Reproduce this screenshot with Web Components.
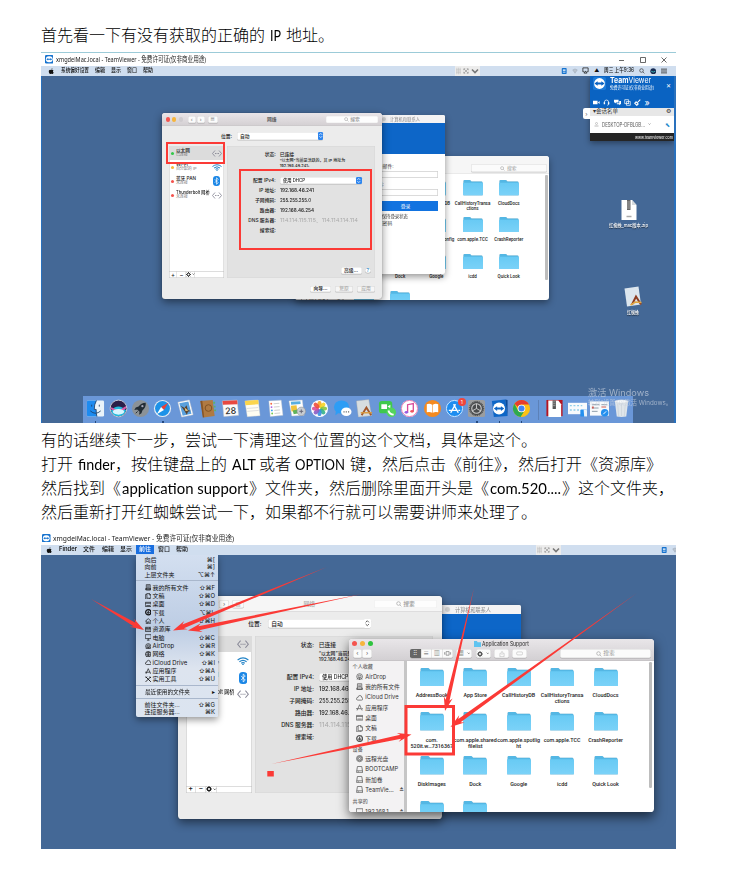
<!DOCTYPE html>
<html>
<head>
<meta charset="utf-8">
<title>Network guide</title>
<style>
html,body{margin:0;background:#fff}
body{width:740px;height:871px;overflow:hidden;font-family:Inter,"Noto Sans CJK SC",sans-serif;color:#222}
</style>
</head>
<body>
<guide-page></guide-page>
<script>
const def=(name,html,after)=>customElements.define(name,class extends HTMLElement{
  connectedCallback(){
    if(this.shadowRoot)return;
    const r=this.attachShadow({mode:'open'});
    r.innerHTML=typeof html==='function'?html(this):html;
    if(after)after(this,r);
  }
});
const svg=(vb,body,w,h)=>`<svg viewBox="${vb}" width="${w}" height="${h||w}" fill="none" style="display:block;flex:none">${body}</svg>`;

/* Text squeezed or stretched horizontally to a given width */
def('fit-text',e=>`<style>:host{display:inline-block;white-space:nowrap;width:${e.getAttribute('w')}px;flex:none}span{display:inline-block;transform-origin:0 50%}</style><span><slot></slot></span>`,
(e,r)=>{const s=r.querySelector('span'),a=e.getBoundingClientRect().width,b=s.getBoundingClientRect().width;if(a&&b)s.style.transform=`scaleX(${a/b})`;});

/* One line of the document */
def('doc-line',`<style>:host{display:flex;align-items:center;height:24px;font:300 16px/24px Lato,"Noto Sans CJK SC",sans-serif;color:#000;white-space:pre}::slotted(fit-text){font-weight:400}</style><slot></slot>`);

/* Icon glyphs */
const P={
 apple:svg('0 0 10 10','<path fill="#111" d="M6.7 2.5C5.9 2.5 5.6 3 5 3S4 2.5 3.3 2.5C2 2.5 1.2 3.7 1.2 5.3c0 2 1.300 4 2.400 4 .6 0 .8-.3 1.500-.3s.9.3 1.500.3c.9 0 1.700-1.200 2.100-2.400C7.300 6.200 7.300 3.900 8.500 3.400c-.4-.6-1-.9-1.800-.9zM6.800.3C5.800.4 5 1.300 5 2.300 6 2.300 6.800 1.300 6.800.3z"/>',6.5),
 search:svg('0 0 10 10','<circle cx="4.200" cy="4.200" r="3" stroke="currentColor"/><path d="M6.500 6.500 9 9" stroke="currentColor"/>',5),
 eth:svg('0 0 20 14','<path d="M6 1 1 7l5 6M14 1l5 6-5 6" stroke="#8a8a98" stroke-width="1.700"/><path d="M6 7h1.500M9.300 7h1.500M12.500 7h1.500" stroke="#667" stroke-width="1.800"/>',10,7),
 wifi:svg('0 0 20 14','<path d="M1 5Q10-2 19 5M4 8Q10 3 16 8M7 10.500Q10 8 13 10.500" stroke="#2585c8" stroke-width="2"/><circle cx="10" cy="12.500" r="1.400" fill="#2585c8"/>',10,7),
 bt:svg('0 0 14 20','<rect width="14" height="20" rx="6" fill="#1b87e6"/><path d="M3.500 6.500l7 7L7 16.500v-13l3.500 3-7 7" stroke="#fff" stroke-width="1.300"/>',7,10),
 tv:svg('0 0 10 10','<rect width="10" height="10" rx="1.500" fill="#1673cf"/><rect x="1" y="1.500" width="8" height="7" rx="3.500" fill="#fff"/><path d="M1.500 5 3.700 3.500v1h2.600v-1L8.500 5 6.300 6.500v-1H3.700v1z" fill="#1673cf"/>',8.5),
 gear:svg('0 0 10 10','<circle cx="5" cy="5" r="2.700" stroke="currentColor" stroke-width="2"/><path d="M5 0v2M5 8v2M0 5h2M8 5h2M1.500 1.500l1.300 1.300M7.200 7.200l1.300 1.300M8.500 1.500 7.200 2.800M2.800 7.200 1.500 8.500" stroke="currentColor" stroke-width="1.500"/>',5),
 caret:svg('0 0 6 4','<path d="m1 1 2 2 2-2" stroke="currentColor"/>',3,2),
 updown:svg('0 0 8 10','<path d="m2 4 2-2 2 2M2 6l2 2 2-2" stroke="currentColor" stroke-width="1.100"/>',5.5,7)
};
const G={
 airdrop:'<circle cx="5" cy="5" r="4"/><circle cx="5" cy="5" r="2"/><path d="M5 5v5M3 7 1.500 9M7 7l1.500 2"/>',
 files:'<path d="M2 1h6v8H2zM3 3h4M3 5h4M1 7h8v2H1z"/>',
 cloud:'<path d="M2.500 8.500Q0 8 .6 6 1 4.700 2.500 5 3 2 5.500 2 8 2.200 8 5q2 .3 1.600 2-.3 1.500-2 1.500z"/>',
 apps:'<path d="M1.500 9 5 1l3.500 8M0 6.500h7M8.500 6.500H10"/>',
 desk:'<path d="M.5 2h9v6.500h-9zM.5 3.500h9M2 7h6"/>',
 docs:'<path d="M3 .5h3.500L9 3v5H3zM6.500.5V3H9M3 2H1v7.500h6V8"/>',
 down:'<circle cx="5" cy="5" r="4" stroke-width="1.800"/><path d="M5 2.500v4M3 5l2 2 2-2" stroke-width="1.500"/>',
 disc:'<circle cx="5" cy="5" r="4.300"/><circle cx="5" cy="5" r="1.500"/><circle cx="5" cy="5" r="3"/>',
 drive:'<path d="M2 .7h6l1 6V9.300H1V6.700zM1 6.700h8M3 8h1"/>',
 home:'<path d="M.5 5 5 1l4.500 4M2 4v5.500h2V6h2v3.500h2V4"/>',
 lib:'<path d="M.5 2h9v6.500h-9zM.5 4h9M.5 6h9M3 2v2M7 2v2"/>',
 comp:'<path d="M.5 1h9v6h-9zM3 9.500h4M5 7v2.500"/>',
 net:'<circle cx="5" cy="5" r="4.300"/><path d="M.7 5h8.600M5 .7v8.600M2 2q3 2 6 0M2 8q3-2 6 0"/>',
 tool:'<path d="m1 1 8 8M9 1 1 9M1 3l2-2M7 1l2 2" stroke-width="1.400"/>'
};
const gl=(n,s)=>svg('0 0 10 10',`<g stroke="currentColor" stroke-width="1">${G[n]}</g>`,s);
const CHROME_EDGE='box-shadow:inset 0 0 0 .5px #0002,0 .4px .5px #0003';

/* Network preferences window */
def('network-window',e=>{const off=e.hasAttribute('inactive');
const item=(c,a,b,i,sel)=>`<div class="it ${sel?'sel':''}"><i style="background:${c}"></i><div class="nm"><b>${a}</b><em>${b}</em></div><div class="ic">${P[i]}</div></div>`;
const row=(l,v,c)=>`<div class="row ${c||''}"><label>${l}:</label><span>${v}</span></div>`;
return `<style>
:host{display:flex;flex-direction:column;width:220px;height:186px;background:#ececec;border-radius:3px;box-shadow:0 3px 8px #0007,0 0 1px #0006;font-size:4.800px;line-height:5px;font-weight:500;overflow:hidden;color:#1a1a1a;white-space:nowrap}
.tb{height:13px;flex:none;display:flex;align-items:center;padding:0 4px 0 3.500px;background:${off?'#f6f6f6':'linear-gradient(#e9e5e8,#d3cfd2)'};box-shadow:inset 0 -.5px #c5c3c5;box-sizing:border-box;gap:2.500px}
.tb>i{width:4.200px;height:4.200px;border-radius:50%}
.bt{background:#fbfbfb;${CHROME_EDGE};border-radius:1.500px;height:6.800px;width:8.500px;display:flex;align-items:center;justify-content:center;color:#777}
.ti{flex:1;text-align:center;color:${off?'#aaa':'#444'}}
.se{width:52px;height:7px;background:#fdfdfd;box-shadow:inset 0 0 0 .5px #0001;border-radius:1.500px;display:flex;align-items:center;justify-content:center;color:#999;gap:1px}
.loc{height:20px;flex:none;display:flex;align-items:center;padding-left:59px;gap:5px}
.sel1{background:#fff;${CHROME_EDGE};border-radius:1.500px;height:7.200px;display:flex;align-items:center;padding-left:3px;justify-content:space-between}
.sel1 u{background:${off?'#fff':'#2f86ee'};color:${off?'#555':'#fff'};border-radius:1.200px;height:7.200px}
.mid{display:flex;gap:3px;padding:0 7px 0 6.700px;height:131.500px;flex:none}
.side{width:55px;background:#fff;box-shadow:inset 0 0 0 .5px #c4c4c4;display:flex;flex-direction:column}
.it{height:14px;display:flex;align-items:center;padding:0 2px 0 2px;gap:2.200px}
.it.sel{background:#dcdcdc}
.it>i{width:3px;height:3px;border-radius:50%;flex:none}
.nm{flex:1;min-width:0;display:flex;flex-direction:column}
.nm b{font-weight:500;font-size:4.700px}.nm em{font-style:normal;font-weight:400;color:#777;font-size:4px;line-height:4.600px}
.ic{width:10px;display:flex;justify-content:center}
.ft{margin-top:auto;height:6.500px;box-shadow:inset 0 .5px #bbb;display:flex;align-items:center}
.ft span{width:8.500px;height:100%;box-shadow:inset -.5px 0 #ccc;display:flex;justify-content:center;align-items:center;font-size:6px;gap:1px}
.pan{flex:1;background:#e2e2e2;box-shadow:inset 0 0 0 .5px #d6d6d6;box-sizing:border-box;padding:5.500px 13px 4px 0;display:flex;flex-direction:column}
.row{display:flex;height:9.950px;flex:none;align-items:center;gap:4px}
.row label{width:49px;text-align:right}
.row .sel1{width:79px}
.row.st{height:5.500px}
.gr span{color:#aaa;font-weight:400}.sm{font-size:4px;line-height:5px;padding-left:53px;height:18.600px;flex:none;padding-top:1.300px;box-sizing:border-box}
.adv{margin-top:auto;display:flex;justify-content:flex-end;gap:3.500px;margin-right:-8.500px;align-items:center}
.btn{background:#fff;${CHROME_EDGE};border-radius:1.500px;height:6.500px;display:flex;align-items:center;justify-content:center}
.btn.d{color:#aaa;background:#f6f6f6}
.act{display:flex;justify-content:flex-end;gap:4px;padding:8px 7px 0 0}
</style>
<div class="tb"><i style="background:${off?'#ddd':'#f4534e'}"></i><i style="background:${off?'#ddd':'#f6b53c'}"></i><i style="background:#cfcccf"></i>
<div class="bt" style="margin-left:2px">‹</div><div class="bt" style="margin-left:-2px">›</div><div class="bt" style="width:10px;font-size:4px">▤</div>
<div class="ti">网络</div><div class="se">${P.search}搜索</div></div>
<div class="loc"><span>位置:</span><div class="sel1" style="width:83px">自动<u>${P.updown}</u></div></div>
<div class="mid"><div class="side">
${item('#34c84a','以太网','已连接','eth',1)}${item('#f6b53c','Wi-Fi','自分配的 IP','wifi')}${item('#f4534e','蓝牙 PAN','未连接','bt')}${item('#f4534e','<fit-text w="33.5">Thunderbolt 网桥</fit-text>','未连接','eth')}
<div class="ft"><span>+</span><span>−</span><span style="width:9px">${P.gear}${P.caret}</span></div></div>
<div class="pan">${row('状态','已连接','st')}<div class="sm">“以太网”当前是活跃的，其 IP 地址为<br>192.168.46.241。</div>
<div class="row"><label>配置 IPv4:</label><div class="sel1"><fit-text w="22">使用 DHCP</fit-text><u>${P.updown}</u></div></div>
${row('IP 地址','<fit-text w="34">192.168.46.241</fit-text>')}${row('子网掩码','<fit-text w="31">255.255.255.0</fit-text>')}${row('路由器','<fit-text w="34">192.168.46.254</fit-text>')}${row('DNS 服务器','<fit-text w="78">114.114.115.115、114.114.114.114</fit-text>','gr')}${row('搜索域','')}
<div class="adv"><div class="btn" style="width:21px">高级...</div><div class="btn" style="width:5.500px;height:5.500px;border-radius:50%;color:#28c">?</div></div></div></div>
<div class="act"><div class="btn" style="width:21px">向导...</div><div class="btn d" style="width:18px">复原</div><div class="btn d" style="width:18px">应用</div></div>`});

/* Folder tile in an icon grid */
def('folder-tile',e=>`<style>:host{display:flex;flex-direction:column;align-items:center;text-align:center;font:500 4.500px/5px Roboto,sans-serif;letter-spacing:-.02px;color:#222;white-space:nowrap;height:36.900px}
div{margin-top:5px;display:flex;flex-direction:column;align-items:center}svg{filter:drop-shadow(0 .3px .3px #0003)}</style>
${svg('0 0 40 31','<defs><linearGradient id="g" x2="0" y2="1"><stop stop-color="#68caf4"/><stop offset="1" stop-color="#7bd2f8"/></linearGradient></defs><path fill="#54b7e4" d="M1 2Q1 0 3 0h10q2 0 3 2l1 1h20q2 0 2 2v10H1z"/><path fill="url(#g)" d="M0 7q0-1.500 1.500-1.500h37Q40 5.500 40 7v22q0 2-2 2H2q-2 0-2-2z"/>',20,15.5)}
<div>${(e.getAttribute('name')||'').split('|').map(t=>`<span>${t}</span>`).join('')}</div>`);

/* Finder window */
def('finder-window',e=>{const off=e.hasAttribute('inactive');
const names=['AddressBook','App Store','CallHistoryDB','CallHistoryTransa|ctions','CloudDocs','com.|520it.w…7316367','com.apple.shared|filelist',e.getAttribute('third')||'com.apple.spotlig|ht','com.apple.TCC','CrashReporter','DiskImages','Dock','Google','icdd','Quick Look','',''];
const s=(i,t,x)=>`<p>${gl(i,6)}<span>${t}</span>${x?'<b>⏏</b>':''}</p>`;
const tb=(w,c)=>`<div class="b" style="width:${w}px">${c}</div>`;
return `<style>
:host{display:flex;flex-direction:column;width:254px;height:144px;background:#fff;border-radius:3px;overflow:hidden;font-size:4.800px;color:#333;white-space:nowrap}
.hd{height:18px;flex:none;background:${off?'#f6f6f6':'linear-gradient(#e9e6e9,#d2cfd2)'};box-shadow:inset 0 -.5px ${off?'#ddd':'#bcb9bc'};display:flex;flex-direction:column}
.t{height:7.700px;display:grid;grid-template-columns:60px 1fr 60px;align-items:center;padding:0 2.500px;line-height:6px;color:#222}
.t>div{display:flex;gap:2.300px;align-items:center}.t i{width:4.300px;height:4.300px;border-radius:50%}
.t .n{justify-content:center;gap:1px;visibility:${off?'hidden':'visible'}}
.bar{display:flex;padding:.8px 2.500px 0 3px;align-items:center}
.b{height:7.200px;background:#fbfbfb;${CHROME_EDGE};border-radius:1.500px;display:flex;align-items:center;justify-content:space-around;color:#555;line-height:7px}
${off?'.bar>.b:not(.se){visibility:hidden}':''}
.v{overflow:hidden}.v>*{flex:1;height:100%;display:grid;place-items:center}.v>*:first-child{background:#666;color:#fff}.v>*+*{box-shadow:inset .4px 0 #ccc}
.se{justify-content:center;gap:1.500px;color:#999;margin-left:auto}
.bd{flex:1;display:flex;min-height:0}
aside{width:48.600px;box-sizing:border-box;background:#f3f2f3;display:flex;flex-direction:column;padding:1px 3px 0;border-right:2.800px solid #c6c6c6;height:126px;overflow:hidden}
h4{margin:0;font:500 4.200px/8px Inter,"Noto Sans CJK SC";color:#666;flex:none}
p{margin:0;height:8.600px;display:flex;align-items:center;gap:1.800px;padding-left:2.800px;color:#555;line-height:8px;flex:none}p span{color:#333}p b{margin-left:3px;font-size:4px}
.g{flex:1;display:grid;grid-template-columns:repeat(5,36.200px);grid-auto-rows:36.900px;padding:6px 0 0 2.300px;box-sizing:border-box;overflow:hidden;align-content:start}
.sc{width:3px;height:105px;margin:1.200px 1.200px 0 0;background:#bdbdbd;border-radius:1px}
</style>
<div class="hd"><div class="t"><div>${off?'':'<i style="background:#f4534e"></i><i style="background:#f6b53c"></i><i style="background:#2fc33f"></i>'}</div><div class="n">${svg('0 0 12 10','<path fill="#5fc4f0" d="M0 0h5l1 2h6v8H0z"/>',6,5)}<fit-text w="39">Application Support</fit-text></div><div></div></div>
<div class="bar">${tb(8,'‹')}${tb(8,'›')}<div class="b v" style="width:36.500px;margin-left:31.500px"><span>⠿</span><span>≡</span><span>▥</span><span>${svg('0 0 12 8','<path d="M3.500 1h5v6h-5zM1 2v4M11 2v4" stroke="#666"/>',6,4)}</span></div><div style="width:2.500px"></div>${tb(13,'▦'+P.caret)}<div style="width:3px"></div>${tb(12.5,P.gear+P.caret)}<div style="width:3px"></div>${tb(12.5,svg('0 0 10 10','<path d="M3 4H1.500v5.500h7V4H7M5 6.500V1M3.500 2.500 5 1l1.500 1.500" stroke="#aaa" stroke-width=".8"/>',5))}<div style="width:2.500px"></div>${tb(12.5,svg('0 0 12 8','<rect x="1" y="1.500" width="10" height="5" rx="2" stroke="#aaa" stroke-width=".8"/>',6,4))}<div class="b se" style="width:76px">${P.search}搜索</div></div></div>
<div class="bd"><aside><h4>个人收藏</h4>${s('airdrop','AirDrop')}${s('files','我的所有文件')}${s('cloud','iCloud Drive')}${s('apps','应用程序')}${s('desk','桌面')}${s('docs','文稿')}${s('down','下载')}<h4 style="margin-top:1.500px;line-height:7px">设备</h4>${s('disc','远程光盘')}${s('drive','BOOTCAMP')}${s('drive','新加卷')}${s('drive','TeamVie…',1)}<h4 style="margin-top:1.500px">共享的</h4>${s('comp','192.168.1…',1)}</aside>
<div class="g">${names.map(n=>`<folder-tile name="${n}"></folder-tile>`).join('')}</div><div class="sc"></div></div>`});

/* Sign-in dialog behind the preference window */
def('signin-dialog',`<style>
:host{display:flex;flex-direction:column;width:79px;height:159px;background:#fff;border-radius:2px;overflow:hidden;font-size:4.800px;line-height:6px;color:#333;white-space:nowrap;box-shadow:0 3px 7px #0006}
.t{height:7.700px;background:#f4f3f4;display:flex;align-items:center;gap:4px;padding-left:16px;color:#888}.t i{width:4px;height:4px;border-radius:50%;background:#d4d4d4}
.h{height:31px;background:#0d66c8}
.f{display:flex;flex-direction:column;padding:9.500px 7px 0}
.i{height:7px;box-shadow:inset 0 0 0 .7px #d0d0d0;margin:2px 0 3px}
.b{height:10px;background:#1273e0;color:#fff;text-align:center;line-height:10px;margin:1.500px 0 2px}
.x{line-height:7px}</style>
<div class="t"><i></i><fit-text w="30">计算机和联系人</fit-text></div><div class="h"></div>
<div class="f"><span>电子邮件:</span><div class="i"></div><span>密码:</span><div class="i"></div><div class="b">登录</div><fit-text class="x" w="35">让我保持登录状态</fit-text><span class="x">忘记密码</span></div>`);

/* Floating remote-session panel */
def('session-panel',`<style>
:host{display:flex;flex-direction:column;width:84px;height:66px;font-size:6px;line-height:7px;color:#333;white-space:nowrap;box-shadow:0 2px 6px #0006}
.h{height:32.500px;background:#0a63c2;color:#fff;display:flex;flex-direction:column;justify-content:space-between;box-sizing:border-box;padding:2px 3px 2px 3px}
.r{display:flex;gap:4px}.r>div{display:flex;flex-direction:column;flex:1}
.n{font:7.500px/8px Inter,sans-serif}.s{font-size:4.600px;line-height:6px}
.i{display:flex;gap:3.300px;align-items:center;height:7px}
.l{height:8px;background:#e7e7e7;display:flex;justify-content:space-between;align-items:center;padding:0 3px;font-size:5.500px}
.m{height:17px;background:#fff;display:flex;align-items:center;gap:3px;padding:0 4px;color:#555}
.f{height:8.500px;background:#252525;color:#fff;text-align:right;line-height:9px;font-size:4px;padding-right:1px}
.tab{position:absolute;left:-7px;top:33px;width:7px;height:11px;background:#fff;border-radius:2px 0 0 2px;display:grid;place-items:center;color:#666}
</style><div class="tab">›</div>
<div class="h"><div class="r">${svg('0 0 14 14','<rect width="14" height="14" rx="2" fill="#1b7ad8"/><circle cx="7" cy="7" r="5.800" fill="#fff"/><path d="M1.500 7 5 4.500V6h4V4.500L12.500 7 9 9.500V8H5v1.500z" fill="#0a63c2"/>',13)}<div><fit-text class="n" w="41"><b>Team</b>Viewer</fit-text><fit-text class="s" w="44">免费许可证(仅非商业用途)</fit-text></div><span style="margin-top:5px">✕</span></div>
<div class="i">${svg('0 0 10 10','<path fill="#fff" d="M0 2.500h6.500v5H0zM7 5l2.500-2v4z"/>',7)}${svg('0 0 10 10','<path d="M2 6V4.500a3 3 0 0 1 6 0V6M8 6v2L6 9" stroke="#fff"/><path d="M1 4.500h2v3H1zM7 4.500h2v3H7z" fill="#fff"/>',7)}${svg('0 0 10 10','<path fill="#fff" d="M0 1h6.500v4H3L1.500 6.500V5H0zM4 6h3.500V3H10v4.500H8.500V9L7 7.500H4z"/>',7)}${svg('0 0 10 10','<path stroke="#fff" d="M1 1h5.500v5.500H1zM3.500 3.500h5.500v5.500H3.500zM5 6.200h2.500"/>',7)}${svg('0 0 10 10','<path stroke="#fff" stroke-width="1.500" d="M9 1 5 5M3 4l3 3-2 2-3-3z"/>',7)}<span style="font-size:9px">»</span></div></div>
<div class="l"><span>▾会话名单</span><span>⚙</span></div>
<div class="m">${svg('0 0 10 10','<circle cx="5" cy="3" r="2" stroke="#999"/><path d="M1 9V7h8v2z" fill="#bbb"/>',5)}<fit-text w="43">DESKTOP-DFBLGB...</fit-text>${P.caret}<span style="margin-left:auto;color:#28c">⬉</span></div>
<div class="f"><fit-text w="38">www.teamviewer.com</fit-text></div>`);

/* Dock and its icons */
const C=(a,b)=>`<circle cx="10" cy="10" r="9" fill="${a}"/>${b}`;
const dock=[
'<rect x="1" y="1.500" width="18" height="17" rx="1.500" fill="#eaf3fa"/><path fill="#1d8bf0" d="M2.500 1.500H11Q8.500 6 8.700 11h2q-.2 4 .8 7.500h-9Q1 18.500 1 17V3q0-1.500 1.500-1.500z"/><path d="M6 6v2M14 6v2M4.500 12.500q5.500 5 11 0M11 1.500Q8.500 6 8.700 11h2q-.2 4 .8 7.500" stroke="#1c3f68" stroke-width=".9"/>',
C('#2b1f48','<path fill="#22b9dd" d="M2 12q8-8 16 0-2 6-8 6.500T2 12z"/><path d="M2 9.500q8 6 16-1" stroke="#d957a8" stroke-width="2"/><ellipse cx="10" cy="13.500" rx="6" ry="3" fill="#d8f6ff"/><circle cx="10" cy="10" r="8.800" stroke="#c9ccd8"/>'),
C('#8b9298','<path fill="#222c35" d="M15.500 4q-5 0-7.500 4L5 9l-1.500 2.500 3-.5 2.500 2.500-.5 3L11 15l1-3q4-3 3.500-8z"/><circle cx="12" cy="7.500" r="1.200" fill="#aab"/><path d="m5 15 2-2" stroke="#222c35"/>'),
C('#e8eef4','<circle cx="10" cy="10" r="7.800" fill="#1d92e8"/><path fill="#ef4035" d="m16 4-7.500 4.500 3 3z"/><path fill="#fff" d="m4 16 4.500-7.500 3 3z"/>'),
'<path fill="#fff" stroke="#ccc" stroke-width=".5" d="M2 3.500 14 1l4 15.500-12 2.500z"/><path fill="#5aa0dc" d="M3.500 4.500 13 2.500l3.300 13-9.300 2z"/><path fill="#55402e" d="m5 7 4 2.500 2-3 1.500 5 3 1-3 1-1 3-2.500-4z"/><path fill="#e3c07a" d="m9 9 4 3-3 1z"/>',
'<path fill="#b07a42" d="m2.500 2 13-1 2 17-12 1.500z"/><path fill="#875526" d="m2.500 2 2-.2 2 17.500-1.500.2z"/><circle cx="11" cy="9.500" r="3.500" stroke="#7d5023"/><path d="M16 4h2M16.500 8h2M17 12h2" stroke="#5bb46a" stroke-width="2"/>',
'<path fill="#fafafa" stroke="#ccc" stroke-width=".5" d="M1.500 2 17 1.200l1.500 16L3 18.500z"/><path fill="#e74840" d="M1.500 2 17 1.200l.4 4.300L2 6z"/>',
'<path fill="#fffdf2" stroke="#ccc" stroke-width=".4" d="m2 2 14-1 2 16.500-13.500 1.200z"/><path fill="#fbd54c" d="m2 2 14-1 .5 4.500-14 1z"/><path d="m4 10 12-1M4.500 13l12-1" stroke="#ddd"/>',
'<path fill="#fff" stroke="#ccc" stroke-width=".4" d="m3 2 13-.8 1.800 16L4.500 18.500z"/><circle cx="5.500" cy="5" r="1" fill="#f56a43"/><circle cx="5.800" cy="8.500" r="1" fill="#a85ae0"/><circle cx="6.200" cy="12" r="1" fill="#3aa2f0"/><circle cx="6.500" cy="15.300" r="1" fill="#74c94f"/><path d="m8 5 6-.5M8.300 8.500l6-.5M8.700 12l6-.5M9 15.200l6-.5" stroke="#ccc"/>',
'<path fill="#fff" stroke="#ccc" stroke-width=".4" d="m1 2 14-1 2 16-13 1z"/><path fill="#59aee0" d="m3 3 10-.7.3 3L3.300 6z"/><path fill="#f0c33c" d="m3 7 6-.4.7 6-6 .5z"/><path fill="#5fb35a" d="m5 12 5-1 1 4-5 1z"/><circle cx="14" cy="13" r="4.500" fill="#c8cdd2" stroke="#888" stroke-width=".5"/><path d="M12 13h4M14 11v4" stroke="#667"/>',
C('#fff',['#f6a623','#f5d327','#8bc540','#33b38a','#3b8de0','#8a5cc4','#d94f9a','#ee4f3c'].map((c,i)=>`<ellipse cx="10" cy="5.600" rx="2.200" ry="3.600" fill="${c}" fill-opacity=".9" transform="rotate(${i*45} 10 10)"/>`).join('')),
'<ellipse cx="9" cy="8.500" rx="8" ry="7" fill="#2d9df5"/><path fill="#2d9df5" d="m3 13-.5 4L7 14z"/><ellipse cx="14" cy="13.500" rx="5.500" ry="4.500" fill="#fff"/><path d="M11 13.500h1.200M13.400 13.500h1.200M15.800 13.500H17" stroke="#666" stroke-width="1.400"/>',
'<path fill="#d7dde0" stroke="#aaa" stroke-width=".4" d="m1.500 2 13-1.500 3 17L3.500 19z"/><path d="m7 17 5-8 5 8" stroke="#a2572c" stroke-width="2"/><path d="M6 14.500h12" stroke="#d99a3e" stroke-width="1.500"/>',
'<rect x="1" y="2" width="14" height="13" rx="3" fill="#3fc84e"/><path fill="#fff" d="M3.500 5.500h6v5h-6zM10 8l3-2v4z"/><circle cx="14" cy="14" r="5" fill="#53d45d"/><path d="M11 12q1 4 5.500 4.500" stroke="#fff" stroke-width="2"/>',
C('#fff','<circle cx="10" cy="10" r="8.500" stroke="#e45ba0" stroke-width=".8"/><path d="M8 14V6l6-1.200V13" stroke="#d84b9a" stroke-width="1.400"/><ellipse cx="6.700" cy="14" rx="1.900" ry="1.400" fill="#9a5be0"/><ellipse cx="12.700" cy="13" rx="1.900" ry="1.400" fill="#f05560"/>'),
C('#f58a1f','<path fill="#fff" d="M9.700 6Q7 4.500 4 5.500v8.500q3-1 5.700.5zM10.300 6Q13 4.500 16 5.500v8.500q-3-1-5.700.5z"/>'),
C('#1d8df0','<circle cx="10" cy="10" r="8.500" stroke="#d8eaff"/><path d="m6 14.500 5-9M14 14.500l-5-9M4 12h8M14 12h2" stroke="#fff" stroke-width="1.500"/>'),
'<rect x="1" y="1" width="18" height="18" rx="2" fill="#9b9d9f"/><circle cx="10" cy="10" r="7" fill="#4a4c4e"/><circle cx="10" cy="10" r="5" stroke="#ccc" stroke-width="1.200"/><path d="M10 5v5l4.500 2.500M10 10l-4.500 2.500" stroke="#ccc"/><circle cx="10" cy="10" r="7.500" stroke="#333" stroke-dasharray="1 1"/>',
'<path fill="#0e66c6" d="m2 2 14-1.500 2.500 17.500L4 19z"/><path fill="#0a4a98" d="M16 .5 18.500 1v17z"/><circle cx="9.500" cy="10" r="6.300" fill="#fff"/><path d="M4 10 7.500 7.500V9h4V7.500L15 10l-3.500 2.500V11h-4v1.500z" fill="#0e66c6"/>',
C('#fbc116','<path fill="#e53c30" d="M10 1q5.500 0 7.900 4.900H10a4.100 4.100 0 0 0-3.800 2.600L2.600 5Q5.400 1 10 1z"/><path fill="#2da94f" d="M2.600 5Q-1 11 3 15.700 5.500 18.500 9 19l3.500-5.500Q8 15 6.300 12z"/><circle cx="10" cy="10" r="4" fill="#fff"/><circle cx="10" cy="10" r="3.200" fill="#4285f4"/>'),
'|',
'<path fill="#b51420" d="M1.500 1h17v17h-17z"/><path fill="#fff" d="M3.500 1.500H14l3 4V19H3.500z"/><path fill="#555" d="M8 1.500h3.500v9H8z"/><path d="M8.500 3h2.500M8.500 5h2.500M8.500 7h2.500" stroke="#ccc" stroke-width=".6"/>',
'<path fill="#f8fafc" d="M0 4h20v12H0z"/><path stroke="#8fcdea" stroke-width="1.500" stroke-dasharray="2 1.800" d="M2 7h13M2 11.500h11"/><rect x="13" y="11" width="7" height="7.500" rx="1" fill="#2590ef"/><path fill="#eaf3fa" d="M16.500 11H19q1 0 1 1v6.500h-3z"/>',
'<path fill="#f8fafc" d="M0 2.500h20v15H0z"/><path stroke="#8c9ba8" stroke-width="1" d="M2 6h8M2 9.500h7M2 13h6M12 6h6"/><path fill="#cc5c55" d="M2 8h2v2H2zM12 8h5v1h-5z"/><circle cx="15.500" cy="14.500" r="4" fill="#2590ef"/><path d="m14 16 3-3" stroke="#fff"/>',
'<path fill="#dfe5ea" d="M3 2h14l-2 16.500q-5 1-10 0z"/><ellipse cx="10" cy="2.500" rx="7" ry="1.800" fill="#f7f9fa" stroke="#bcc5cc" stroke-width=".4"/><path d="m6 5 1 13M10 5v13M14 5l-1 13" stroke="#c5cdd5" stroke-width=".6"/>'];
const run=[0,3,17,18,19];
def('mac-dock',`<style>
:host{display:flex;background:#6a97d8;height:27px;width:550px;padding:0 0 0 1.500px;box-sizing:border-box;align-items:center}
.d{width:22.450px;height:27px;position:relative;display:flex;flex-direction:column;align-items:center;justify-content:center;padding-bottom:1.500px;box-sizing:border-box}
.s{width:10.500px;height:20px;display:flex;justify-content:center}.s:after{content:"";width:1px;background:#5c81b8}
u{position:absolute;bottom:0;width:1.500px;height:2.500px;background:#24497e}
.cal{position:absolute;font:500 9px/9px Inter,sans-serif;top:10px;color:#333;transform:rotate(-3deg)}
.bad{position:absolute;right:0;top:2px;width:8px;height:8px;border-radius:50%;background:#f0463c;color:#fff;font:5px/8px Inter,sans-serif;text-align:center}
</style>${dock.map((d,i)=>d==='|'?'<div class="s"></div>':`<div class="d">${svg('0 0 20 20',d,19)}${i==6?'<span class="cal">28</span>':''}${i==16?'<span class="bad">1</span>':''}${run.includes(i)?'<u></u>':''}</div>`).join('')}`);

/* Icon standing on the desktop */
def('desk-icon',e=>`<style>:host{display:flex;flex-direction:column;align-items:center;gap:2.500px;width:44px;color:#fff;font-size:5px;line-height:7px;font-weight:500;text-shadow:0 .5px 1px #000a}</style>
${e.getAttribute('kind')==='zip'?svg('0 0 16 20','<path fill="#fff" d="M.5 0H11l4.500 5v15H.5z"/><path fill="#d5d9dc" d="M11 0v5h4.500z"/><path fill="#666" d="M6 0h3.500v10H6z"/><path d="M6 2h3M6 4h3M6 6h3M6 8h3" stroke="#ccc" stroke-width=".6"/><path d="M5.500 16.500h5" stroke="#aaa" stroke-width="1.500"/>',16,20):svg('0 0 18 21','<path fill="#dce6ee" d="m.5 2.500 14-2 2.500 18-14 2z"/><path d="m8 18.500 4-8 5 8" stroke="#8d3d23" stroke-width="2"/><path d="m6.500 19 5-3 6 .5" stroke="#e2a843" stroke-width="1.600"/>',18,21)}
<fit-text w="${e.getAttribute('w')}">${e.getAttribute('label')}</fit-text>`);

/* Dropdown menu */
def('go-menu',()=>{const r=(a,k,i)=>`<div class="r ${i?'i':''}">${i?gl(i,6.5):''}<span>${a}</span><b>${k}</b></div>`;
return `<style>:host{display:flex;flex-direction:column;width:82px;height:162px;box-sizing:border-box;background:linear-gradient(#d3dff0,#bdcde4 45%,#dde4ef 70%,#dbe4f0);padding:1px 3px 0 8.500px;font-size:6px;color:#111;box-shadow:0 3px 7px #0006;white-space:nowrap;border-radius:0 0 2px 2px}
.r{display:flex;align-items:center;height:7.600px;line-height:7.600px}.r.i{height:8.320px;gap:1.500px}.r b{font-weight:400;margin-left:auto}
hr{border:0;border-top:1px solid #a9b7cc;margin:2px -3px 2px -8.500px}</style>
${r('向后','⌘[')}${r('向前','⌘]')}${r('上层文件夹','⌥⌘↑')}<hr style="margin-bottom:2.200px">
${r('我的所有文件','⇧⌘F','files')}${r('文稿','⇧⌘O','docs')}${r('桌面','⇧⌘D','desk')}${r('下载','⌥⌘L','down')}${r('个人','⇧⌘H','home')}${r('资源库','','lib')}${r('电脑','⇧⌘C','comp')}${r('AirDrop','⇧⌘R','airdrop')}${r('网络','⇧⌘K','net')}${r('iCloud Drive','⇧⌘I','cloud')}${r('应用程序','⇧⌘A','apps')}${r('实用工具','⇧⌘U','tool')}
<hr>${r('<fit-text w="45">最近使用的文件夹</fit-text>','▸')}<hr>${r('前往文件夹...','⇧⌘G')}${r('连接服务器...','⌘K')}`});

/* Remote desktop host: title bar, menu bar, free desktop */
def('remote-screen',e=>{const w=e.getAttribute('cap'),fr=e.hasAttribute('frame');return `<style>
:host{display:flex;flex-direction:column;width:635px;background:#fff;box-sizing:border-box;overflow:hidden;position:relative}
.t{height:14px;display:flex;align-items:center;gap:2.500px;padding-left:${fr?3.5:1}px;font-size:7.500px;line-height:13px;color:#222;border-top:${fr?'1px solid #9ccbd8':'0'};box-sizing:border-box;font-family:"Noto Sans","Noto Sans CJK SC",sans-serif}
.c{margin-left:auto;display:flex;gap:13px;padding-right:8px;align-items:center}
.d{flex:1;position:relative;background:#446896;overflow:hidden}
.m{height:9.500px;background:#d0deef;display:flex;align-items:center;font-size:5.600px;line-height:9px;color:#111;position:relative;white-space:nowrap;font-weight:500}
</style><div class="t">${P.tv}<fit-text w="${w}">xmgdeiMac.local - TeamViewer - 免费许可证(仅非商业用途)</fit-text>
${fr?`<div class="c">${svg('0 0 8 8','<path d="M1 4.500h5" stroke="#444" stroke-width=".8"/>',8)}${svg('0 0 8 8','<path d="M1.500 1.500h5v5h-5z" stroke="#444" stroke-width=".8"/>',8)}${svg('0 0 8 8','<path d="m1.500 1.500 5 5M6.500 1.500l-5 5" stroke="#444" stroke-width=".8"/>',8)}</div>`:''}</div>
<div class="m"><slot name="menu"></slot></div><div class="d"><slot></slot></div>`});
def('menu-strip',e=>`<style>:host{display:flex;align-items:center;width:100%;height:100%;padding-left:${e.getAttribute('pad')}px;gap:${e.getAttribute('gap')}px;box-sizing:border-box}</style><slot></slot>`);
def('status-icons',e=>`<style>:host{display:flex;align-items:center;gap:4.800px;margin-left:auto;margin-right:${e.getAttribute('end')}px;flex:none}</style>
${svg('0 0 8 8','<rect x="1" width="6.500" height="8" rx="1" fill="#1673cf"/><path d="M2.500 2h3.500v1.500H2.500zM2.500 5h3.500v1H2.500z" fill="#fff"/>',6)}${svg('0 0 8 8','<path d="M1 2.500Q4 0 7 2.500L4 7z" fill="#bac4d0" stroke="#98a4b4" stroke-width=".6"/>',6)}
${e.hasAttribute('short')?'':svg('0 0 8 8','<path d="M1 1h6v4.500H5.500M2.500 5.500H1V1M4 4.500 2.500 7h3z" stroke="#222" stroke-width=".9"/>',7)+'<span style="font-size:5px">▲</span><fit-text w="30">周三 上午9:36</fit-text>'+svg('0 0 10 10','<circle cx="4.200" cy="4.200" r="3" stroke="#222"/><path d="M6.500 6.500 9 9" stroke="#222"/>',6)+svg('0 0 8 8','<circle cx="4" cy="4" r="3.600" fill="#162a50"/><path d="M1.500 4q2.500 2 5 0" stroke="#4cc" />',6.5)+svg('0 0 8 8','<path d="M0 1.500h8M0 4h8M0 6.500h8" stroke="#333" stroke-width="1.100"/>',6)}`);
def('grip-tab',`<style>:host{display:flex;align-items:center;justify-content:center;gap:2px;width:25px;height:9.500px;background:#ececec}</style>
${svg('0 0 6 8','<path d="M1 0v8M3 0v8M5 0v8M0 2h6M0 4h6M0 6h6" stroke="#bbb" stroke-width=".6"/>',5,8)}${svg('0 0 8 8','<path d="M1 3V1h2M7 3V1H5M1 5v2h2M7 5v2H5M1.500 1.500l5 5M6.500 1.500l-5 5" stroke="#888" stroke-width=".8"/>',6)}${svg('0 0 8 6','<path d="m1 1.500 3 3 3-3" stroke="#777" stroke-width="1.600"/>',8,6)}`);

/* Red pen marks over the second desktop; coordinates are page pixels */
const arrow=(x1,y1,x2,y2,hw=4.5,L=14)=>{const a=Math.atan2(y2-y1,x2-x1),c=Math.cos(a),s=Math.sin(a),p=(d,o)=>`${(x2-c*d-s*o).toFixed(1)},${(y2-s*d+c*o).toFixed(1)}`;return `<polygon points="${x1},${y1} ${p(L-3,-2)} ${p(L,-hw)} ${x2},${y2} ${p(L,hw)} ${p(L-3,2)}" fill="#fb3a36"/>`};
def('pen-marks',`<style>:host{display:block}svg{display:block}</style><svg width="635" height="318" viewBox="41 531 635 318">
${arrow(91,599,144,630)}${arrow(327,567,173,630.500)}${arrow(362,594,188,630.500)}${arrow(474,588,445,711)}${arrow(637,593,450.500,727)}${arrow(271.500,764,411.500,734.500)}
<rect x="406" y="706.500" width="47.500" height="47.500" fill="none" stroke="#fb3a36" stroke-width="3"/><rect x="267.300" y="771" width="6.500" height="5.500" fill="#fb3a36"/></svg>`);

def('guide-page',`<style>
:host{display:flex;flex-direction:column;width:740px;height:871px;box-sizing:border-box;padding:23px 0 0 41px}
.a{position:absolute}
.pre{margin-bottom:5px}
.txt{display:flex;flex-direction:column;height:108px;padding-top:5px;box-sizing:border-box}
.hi{background:#1a6fe0;color:#fff;padding:0 3px;margin:0 -3px}
.box{box-sizing:border-box;border:2.200px solid #fb3a36}
.wm{color:#c9d2dfb0;white-space:nowrap}
b.f{font-weight:600}
</style>
<doc-line class="pre">首先看一下有没有获取的正确的<fit-text w="11" style="margin:0 5px">IP</fit-text>地址。</doc-line>
<remote-screen frame cap="150" style="height:371px">
<menu-strip slot="menu" pad="7" gap="6"><span>${P.apple}</span><fit-text w="28">系统偏好设置</fit-text><fit-text w="10">编辑</fit-text><fit-text w="10">显示</fit-text><fit-text w="10">窗口</fit-text><fit-text w="10">帮助</fit-text><status-icons end="9"></status-icons></menu-strip>
<grip-tab slot="menu" class="a" style="left:414px;top:0"></grip-tab>
<finder-window inactive third="com.apple.iconfig" class="a" style="left:254px;top:80.500px;box-shadow:0 3px 7px #0006"></finder-window>
<signin-dialog class="a" style="left:325px;top:39.500px"></signin-dialog>
<network-window class="a" style="left:121px;top:37.500px"></network-window>
<div class="a box" style="left:125px;top:66.500px;width:59px;height:22px"></div>
<div class="a box" style="left:198px;top:93px;width:133px;height:81.500px"></div>
<desk-icon class="a" kind="zip" w="39" label="红蜘蛛_mac版本.zip" style="left:565.500px;top:124px"></desk-icon>
<desk-icon class="a" w="12" label="红蜘蛛" style="left:569.500px;top:210px"></desk-icon>
<session-panel class="a" style="left:549px;top:-.5px"></session-panel>
<mac-dock class="a" style="left:42px;bottom:0"></mac-dock>
<div class="a wm" style="left:547px;top:310px;font-size:9px;line-height:13px"><fit-text w="61">激活 Windows</fit-text></div>
<div class="a wm" style="left:547px;top:322px;font-size:6.500px;line-height:11px"><fit-text w="84">转到“设置”以激活 Windows。</fit-text></div>
<div class="a" style="right:0;top:0;bottom:0;width:2px;background:#2a71bd"></div>
<div class="a" style="left:0;top:0;bottom:0;width:1px;background:#2a71bd"></div>
</remote-screen>
<div class="txt">
<doc-line>有的话继续下一步，尝试一下清理这个位置的这个文档，具体是这个。</doc-line>
<doc-line>打开<fit-text w="37" style="margin-left:5px">finder</fit-text>，按住键盘上的<fit-text w="24" style="margin:0 3.500px 0 4.500px">ALT</fit-text>或者<fit-text w="50" style="margin:0 5px 0 4px">OPTION</fit-text>键，然后点击《前往》<span style="margin-left:-8px">，</span>然后打开《资源库》</doc-line>
<doc-line>然后找到《<fit-text w="126" style="margin:0 1px">application support</fit-text>》文件夹，然后删除里面开头是《<fit-text w="71" style="margin:0 1px">com.520....</fit-text>》这个文件夹，</doc-line>
<doc-line>然后重新打开红蜘蛛尝试一下，如果都不行就可以需要讲师来处理了。</doc-line>
</div>
<remote-screen cap="181" style="height:318px">
<menu-strip slot="menu" pad="4.500" gap="6.600"><span>${P.apple}</span><fit-text w="18"><b class="f">Finder</b></fit-text><fit-text w="12">文件</fit-text><fit-text w="12">编辑</fit-text><fit-text w="12">显示</fit-text><span class="hi"><fit-text w="12">前往</fit-text></span><fit-text w="12">窗口</fit-text><fit-text w="12">帮助</fit-text><status-icons short end="-2"></status-icons></menu-strip>
<grip-tab slot="menu" class="a" style="left:495px;top:0"></grip-tab>
<div class="a" style="left:385px;top:50px"><signin-dialog style="zoom:1.200"></signin-dialog></div>
<div class="a" style="left:136.500px;top:41.500px"><network-window inactive style="zoom:1.200"></network-window></div>
<div class="a" style="left:308px;top:84.500px"><finder-window style="zoom:1.200;box-shadow:0 4px 10px #0009"></finder-window></div>
<go-menu class="a" style="left:95px;top:0"></go-menu>
<pen-marks class="a" style="left:0;top:-23.500px"></pen-marks>
</remote-screen>`);
</script>
</body>
</html>
